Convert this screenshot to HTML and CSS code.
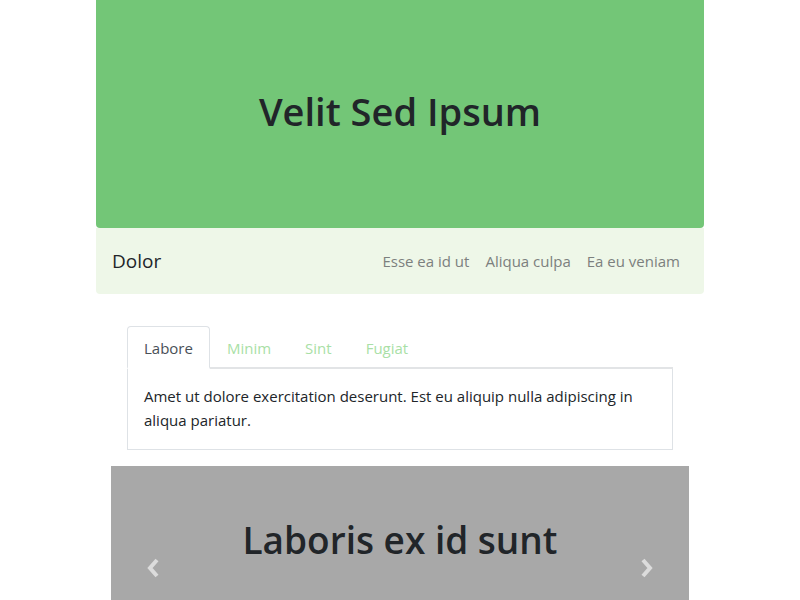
FILE: index.html
```html
<!DOCTYPE html>
<html>
<head>
<meta charset="utf-8">
<link rel="stylesheet" href="styles.css">
</head>
<body>
<div class="container">
  <header class="hero">
    <h1 class="hero-title">Velit Sed Ipsum</h1>
  </header>
  <nav class="navbar">
    <span class="brand">Dolor</span>
    <ul class="nav-links">
      <li><a href="#">Esse ea id ut</a></li>
      <li><a href="#">Aliqua culpa</a></li>
      <li><a href="#">Ea eu veniam</a></li>
    </ul>
  </nav>
  <section class="tabs-wrap">
    <ul class="tabs">
      <li class="tab active">Labore</li>
      <li class="tab">Minim</li>
      <li class="tab">Sint</li>
      <li class="tab">Fugiat</li>
    </ul>
    <div class="tab-content">Amet ut dolore exercitation deserunt. Est eu aliquip nulla adipiscing in aliqua pariatur.</div>
  </section>
  <section class="carousel">
    <h2 class="carousel-title">Laboris ex id sunt</h2>
    <span class="ctrl prev"><svg width="16" height="22" viewBox="0 0 16 22"><path d="M11 3 L4 11 L11 19" fill="none" stroke="#dcdcdc" stroke-width="4" stroke-linejoin="miter"/></svg></span>
    <span class="ctrl next"><svg width="16" height="22" viewBox="0 0 16 22"><path d="M5 3 L12 11 L5 19" fill="none" stroke="#dcdcdc" stroke-width="4" stroke-linejoin="miter"/></svg></span>
  </section>
</div>
</body>
</html>
```
FILE: styles.css
```css
html, body { margin: 0; padding: 0; }
body {
  font-family: "Open Sans", "Noto Sans", sans-serif;
  color: #212529;
  background: #fff;
  font-size: 16px;
}
.container {
  width: 608px;
  margin: 0 auto;
}
.hero {
  height: 228px;
  background: #73c677;
  border-radius: 0 0 4px 4px;
  display: flex;
  align-items: center;
  justify-content: center;
}
.hero-title {
  margin: 0 0 6px;
  font-size: 38px;
  font-weight: 600;
  color: #212529;
}
.navbar {
  height: 66px;
  background: #eef7e8;
  border-radius: 0 0 4px 4px;
  display: flex;
  align-items: center;
  justify-content: space-between;
  padding: 0 24px 0 16px;
  box-sizing: border-box;
}
.brand { font-size: 19px; color: #212529; }
.nav-links {
  list-style: none; margin: 0; padding: 0;
  display: flex; gap: 16px;
}
.nav-links a { color: #7c807e; text-decoration: none; font-size: 15px; }
.tabs-wrap { padding: 32px 31px 16px; }
.tabs {
  list-style: none; margin: 0; padding: 0;
  display: flex;
  border-bottom: 2px solid #e2e4e6;
}
.tab {
  padding: 11px 16px 9px;
  font-size: 15px;
  color: #a9dfa6;
  border: 1px solid transparent;
  border-radius: 4px 4px 0 0;
  margin-bottom: -2px;
}
.tab.active {
  color: #495057;
  background: #fff;
  border-color: #dee2e6 #dee2e6 #fff;
  border-bottom: 2px solid #fff;
}
.tab-content {
  border: 1px solid #dee2e6;
  border-top: none;
  padding: 15px 16px 17px;
  font-size: 15px;
  line-height: 24px;
}
.carousel {
  position: relative;
  margin: 0 15px;
  height: 134px;
  background: #a8a8a8;
  display: flex;
  justify-content: center;
  padding-top: 50px;
  box-sizing: border-box;
}
.carousel-title {
  margin: 0;
  font-size: 37px;
  font-weight: 600;
  line-height: 48px;
}
.ctrl { position: absolute; top: 91px; }
.prev { left: 35px; }
.next { right: 35px; }
```
